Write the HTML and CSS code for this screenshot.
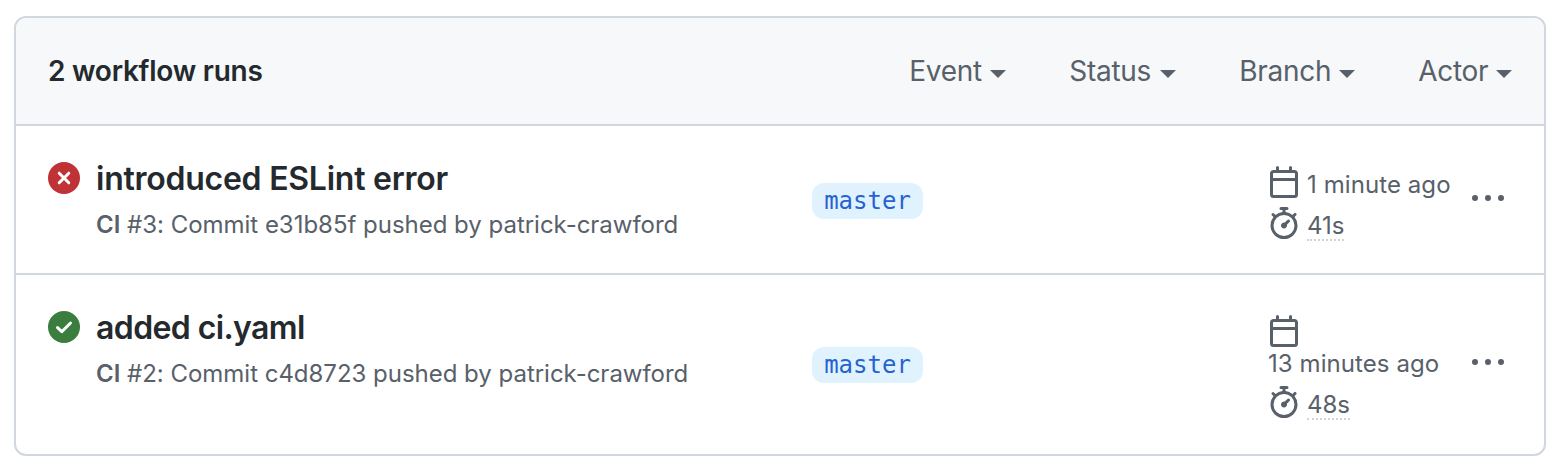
FILE: index.html
```
<!DOCTYPE html>
<html lang="en">
<head>
<meta charset="utf-8">
<title>Workflow runs</title>
<link rel="stylesheet" href="styles.css">
</head>
<body>
<svg class="sprite" aria-hidden="true">
  <symbol id="calendar" viewBox="0 0 16 16"><path d="M4.75 0a.75.75 0 01.75.75V2h5V.75a.75.75 0 011.5 0V2h1.25c.966 0 1.75.784 1.75 1.75v10.5A1.75 1.75 0 0113.25 16H2.75A1.75 1.75 0 011 14.25V3.75C1 2.784 1.784 2 2.75 2H4V.75A.75.75 0 014.75 0zm0 3.5h8.5a.25.25 0 01.25.25V6h-11V3.75a.25.25 0 01.25-.25h2zm-2.25 4v6.75c0 .138.112.25.25.25h10.5a.25.25 0 00.25-.25V7.5h-11z" fill-rule="evenodd"/></symbol>
  <symbol id="stopwatch" viewBox="0 0 16 16"><path d="M5.75.75A.75.75 0 016.5 0h3a.75.75 0 010 1.5h-.75v1l-.001.041a6.718 6.718 0 013.464 1.435l.007-.006.75-.75a.75.75 0 111.06 1.06l-.75.75-.006.007a6.75 6.75 0 11-10.548 0L2.72 5.03l-.75-.75a.75.75 0 011.06-1.06l.75.75.007.006A6.718 6.718 0 017.25 2.541a.756.756 0 010-.041v-1H6.5a.75.75 0 01-.75-.75zM8 14.5A5.25 5.25 0 108 4a5.25 5.25 0 000 10.5zm.389-6.7l1.33-1.33a.75.75 0 111.061 1.06L9.45 8.861A1.502 1.502 0 018 10.75a1.5 1.5 0 11.389-2.95z" fill-rule="evenodd"/></symbol>
  <symbol id="kebab" viewBox="0 0 16 16"><path d="M8 9a1.5 1.5 0 100-3 1.5 1.5 0 000 3zM1.5 9a1.5 1.5 0 100-3 1.5 1.5 0 000 3zm13 0a1.5 1.5 0 100-3 1.5 1.5 0 000 3z"/></symbol>
</svg>
<main class="box">
  <header class="box-header">
    <h1 class="count">2 workflow runs</h1>
    <nav class="filters">
      <span class="filter event">Event<i class="caret"></i></span>
      <span class="filter status-filter">Status<i class="caret"></i></span>
      <span class="filter branch-filter">Branch<i class="caret"></i></span>
      <span class="filter actor">Actor<i class="caret"></i></span>
    </nav>
  </header>
  <article class="run">
    <svg class="status failed" viewBox="0 0 32 32"><circle cx="16" cy="16" r="16"/><path d="M11.2 11.2l9.6 9.6m0-9.6l-9.6 9.6"/></svg>
    <div class="summary">
      <h2 class="title title-long">introduced ESLint error</h2>
      <p class="detail"><b>CI</b> #3: Commit e31b85f pushed by patrick-crawford</p>
    </div>
    <div class="branch-cell"><span class="branch">master</span></div>
    <div class="times">
      <div class="time"><svg class="icon"><use href="#calendar"/></svg><span class="ago">1 minute ago</span></div>
      <div class="time"><svg class="icon"><use href="#stopwatch"/></svg><span class="duration">41s</span></div>
    </div>
    <svg class="icon menu"><use href="#kebab"/></svg>
  </article>
  <article class="run run-tall">
    <svg class="status passed" viewBox="0 0 32 32"><circle cx="16" cy="16" r="16"/><path d="M9.5 16.6l4.3 4.1 8.7-8.7"/></svg>
    <div class="summary">
      <h2 class="title">added ci.yaml</h2>
      <p class="detail"><b>CI</b> #2: Commit c4d8723 pushed by patrick-crawford</p>
    </div>
    <div class="branch-cell"><span class="branch">master</span></div>
    <div class="times">
      <div class="time wrapped"><svg class="icon"><use href="#calendar"/></svg><span class="ago">13 minutes ago</span></div>
      <div class="time"><svg class="icon"><use href="#stopwatch"/></svg><span class="duration">48s</span></div>
    </div>
    <svg class="icon menu"><use href="#kebab"/></svg>
  </article>
</main>
</body>
</html>
```
FILE: styles.css
```
* { box-sizing: border-box; }
body {
  margin: 0;
  padding: 16px 18px 12px 14px;
  background: #fff;
  color: #24292e;
  font-family: Inter, "Liberation Sans", sans-serif;
}
h1, h2, p { margin: 0; }
svg { display: block; flex: none; }
.sprite { display: none; }
.box {
  height: 440px;
  border: 2px solid #d0d7de;
  border-radius: 12px;
  overflow: hidden;
}
.box-header {
  display: flex;
  justify-content: space-between;
  align-items: center;
  height: 108px;
  padding: 0 32px;
  background: #f6f8fa;
  border-bottom: 2px solid #d0d7de;
}
.count { font-size: 28px; font-weight: 600; line-height: 42px; letter-spacing: -0.25px; }
.filters { display: flex; gap: 64px; }
.filter {
  display: flex;
  align-items: center;
  justify-content: space-between;
  color: #586069;
  font-size: 28px;
  line-height: 42px;
  letter-spacing: -0.3px;
  text-indent: -0.7px;
}
.event { width: 96px; }
.status-filter { width: 106px; }
.branch-filter { width: 115px; }
.actor { width: 93px; }
.caret {
  margin-top: 5px;
  border: 8px solid transparent;
  border-top-color: currentColor;
  border-bottom: 0;
}
.run {
  display: grid;
  grid-template-columns: 48px 716px 456px 204px 32px;
  height: 149px;
  padding-left: 32px;
  border-bottom: 2px solid #d0d7de;
}
.run-tall { height: 179px; border-bottom: 0; }
.status { width: 32px; height: 32px; margin-top: 36px; }
.status path { fill: none; stroke: #fff; stroke-width: 3; stroke-linecap: round; stroke-linejoin: round; }
.failed { fill: #bf3236; }
.passed { fill: #3a7d3f; }
.summary { padding-top: 29px; }
.title { font-size: 32px; font-weight: 600; line-height: 48px; letter-spacing: -0.6px; }
.title-long { letter-spacing: -0.25px; }
.detail {
  margin-top: 4px;
  color: #586069;
  font-size: 24px;
  line-height: 36px;
  letter-spacing: -0.02px;
  white-space: nowrap;
}
.detail b { font-weight: 600; }
.branch-cell { align-self: center; padding-top: 2px; }
.run-tall .branch-cell { padding-top: 0; }
.branch {
  display: block;
  width: 111px;
  height: 36px;
  border-radius: 12px;
  background: #e1f2ff;
  color: #2564d0;
  font: 24px/36px "DejaVu Sans Mono", monospace;
  text-align: center;
}
.times { padding-top: 40px; color: #586069; font-size: 24px; }
.icon { width: 32px; height: 32px; fill: #586069; }
.time { display: flex; gap: 7px; height: 41px; }
.time span { line-height: 32px; padding-top: 3px; white-space: nowrap; }
.time .ago { letter-spacing: 0.08px; }
.wrapped { flex-direction: column; gap: 0; height: 71px; }
.time.wrapped .ago { padding-top: 1px; }
.time .duration { height: 34px; border-bottom: 2px dotted #d1d5da; }
.menu { align-self: center; margin-bottom: 2px; }
.run-tall .menu { margin-bottom: 3px; }
```
